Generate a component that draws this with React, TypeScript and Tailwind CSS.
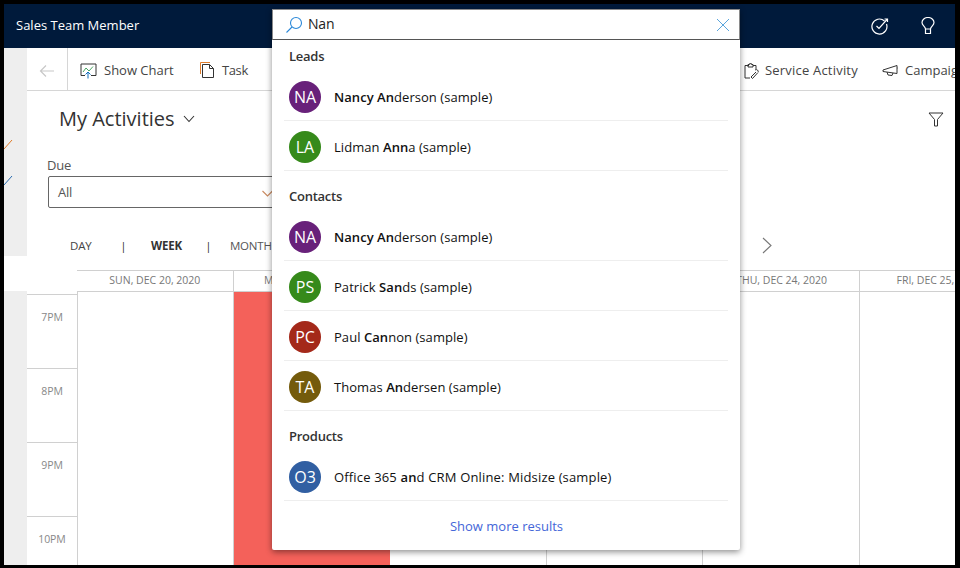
const font = { fontFamily: '"Open Sans", "Noto Sans", sans-serif' };

type Row = { initials: string; color: string; wide?: boolean; parts: [string, boolean][] };
const sections: { title: string; first?: boolean; rows: Row[] }[] = [
  {
    title: "Leads",
    first: true,
    rows: [
      { initials: "NA", color: "bg-[#68217a]", parts: [["Nancy An", true], ["derson (sample)", false]] },
      { initials: "LA", color: "bg-[#368a1b]", parts: [["Lidman ", false], ["Ann", true], ["a (sample)", false]] },
    ],
  },
  {
    title: "Contacts",
    rows: [
      { initials: "NA", color: "bg-[#68217a]", parts: [["Nancy An", true], ["derson (sample)", false]] },
      { initials: "PS", color: "bg-[#368a1b]", parts: [["Patrick ", false], ["San", true], ["ds (sample)", false]] },
      { initials: "PC", color: "bg-[#a4291a]", parts: [["Paul ", false], ["Can", true], ["non (sample)", false]] },
      { initials: "TA", color: "bg-[#745b0c]", parts: [["Thomas ", false], ["An", true], ["dersen (sample)", false]] },
    ],
  },
  {
    title: "Products",
    rows: [
      { initials: "O3", color: "bg-[#315fa2]", wide: true, parts: [["Office 365 ", false], ["an", true], ["d CRM Online: Midsize (sample)", false]] },
    ],
  },
];

function ResultRow({ row }: { row: Row }) {
  return (
    <div className="mx-[12px] flex h-[50px] items-center border-b border-[#eeeeee] pl-[5px] pt-[3px]">
      <div className={`flex h-[32px] w-[32px] shrink-0 items-center justify-center rounded-full text-[16px] text-white ${row.color}`}>
        {row.initials}
      </div>
      <div className={`ml-[13px] pt-[2px] text-[13px] text-[#111111] ${row.wide ? "tracking-[0.16px]" : "tracking-[0.05px]"}`}>
        {row.parts.map(([t, b], i) => (
          <span key={i} className={b ? "font-semibold" : ""}>{t}</span>
        ))}
      </div>
    </div>
  );
}

function Dropdown() {
  return (
    <div className="absolute left-[268px] top-[5px] h-[541px] w-[468px] rounded-b-[2px] bg-white shadow-[0_2px_6px_rgba(0,0,0,0.45)]">
      <div className="flex h-[31px] items-center border border-[#8a8a8a] border-b-[#555555] pl-[12px] pr-[9px]">
        <svg width="18" height="18" viewBox="0 0 18 18" fill="none" stroke="#2b88d8" strokeWidth="1.1">
          <circle cx="11" cy="7" r="5.5" />
          <path d="M7 11 L1.5 16.5" />
        </svg>
        <span className="ml-[5px] flex-1 pb-[2px] text-[14px] tracking-[-0.2px] text-[#222222]">Nan</span>
        <svg width="14" height="14" viewBox="0 0 14 14" fill="none" stroke="#5aa5dc" strokeWidth="1">
          <path d="M1 1 L13 13 M13 1 L1 13" />
        </svg>
      </div>
      {sections.map((s) => (
        <div key={s.title}>
          <div className={`flex items-center pl-[17px] text-[13px] font-semibold tracking-[-0.25px] text-[#333333] ${s.first ? "h-[31px] pt-[3px]" : "h-[40px] pt-[12px]"}`}>
            {s.title}
          </div>
          {s.rows.map((r, i) => (
            <ResultRow key={i} row={r} />
          ))}
        </div>
      ))}
      <div className="flex h-[49px] items-center justify-center pl-[1px] pt-[3px] text-[13px] text-[#4466d8]">
        Show more results
      </div>
    </div>
  );
}

function Toolbar() {
  return (
    <div className="flex h-[43px] shrink-0 overflow-hidden whitespace-nowrap border-b border-[#d6d6d6] text-[13px] text-[#444444]">
      <div className="flex h-full w-[41px] shrink-0 items-center justify-center border-r border-[#d6d6d6] pt-[3px]">
        <svg width="16" height="14" viewBox="0 0 16 14" fill="none" stroke="#c8c8c8" strokeWidth="1.2">
          <path d="M15 7 H1.5 M7 1.5 L1.5 7 L7 12.5" />
        </svg>
      </div>
      <div className="flex h-full items-center pt-[3px]">
        <svg className="ml-[12px] shrink-0" width="17" height="16" viewBox="0 0 17 16" fill="none" strokeWidth="1">
          <path d="M5 12.5 H1 V1 H16 V12.5 H11" stroke="#333333" />
          <path d="M3 9 L6 5 L9 8 L13 3.5" stroke="#4aa564" />
          <path d="M8 15.5 V9 M5.5 11.5 L8 9 L10.5 11.5" stroke="#106ebe" />
        </svg>
        <span className="ml-[7px] w-[71px]">Show Chart</span>
        <svg className="ml-[25px] shrink-0" width="15" height="17" viewBox="0 0 15 17" fill="none" strokeWidth="1">
          <path d="M0.5 12 V0.5 H10" stroke="#e07b28" />
          <path d="M2.5 2.5 H9.5 L13.5 6.5 V15.5 H2.5 Z M9.5 2.5 V6.5 H13.5" stroke="#333333" />
        </svg>
        <span className="ml-[7px] w-[26px] tracking-[-0.4px]">Task</span>
        <svg className="ml-[496px] shrink-0" width="15" height="16" viewBox="0 0 15 16" fill="none" stroke="#333333" strokeWidth="1">
          <path d="M5 2.5 H1 V15 H6 M9 2.5 H12 V6 M4 4 V1.5 H5.5 V0.7 H7.5 V1.5 H9 V4 Z" />
          <path d="M7 14 L12 9 M11 7 A2 2 0 0 1 14 9.5 M7 14 L8.5 15.5 L13.5 10" />
        </svg>
        <span className="ml-[6px] w-[93px] tracking-[0.2px]">Service Activity</span>
        <svg className="ml-[24px] shrink-0" width="16" height="14" viewBox="0 0 16 14" fill="none" stroke="#333333" strokeWidth="1">
          <path d="M1 6 L15 1.5 V9.5 L1 7.5 Z M15 4 H15.5 M5 8 L6 11 L10 11.5 L11 9" />
        </svg>
        <span className="ml-[7px]">Campaign Response</span>
      </div>
    </div>
  );
}

const days = ["SUN, DEC 20, 2020", "MON, DEC 21, 2020", "TUE, DEC 22, 2020", "WED, DEC 23, 2020", "THU, DEC 24, 2020", "FRI, DEC 25, 2020"];

function Calendar() {
  return (
    <div className="flex min-h-0 flex-1 flex-col overflow-hidden">
      <div className="ml-[50px] flex h-[22px] shrink-0 border-y border-[#d0d0d0]">
        {days.map((d) => (
          <div key={d} className="flex w-[156.7px] shrink-0 items-center justify-center whitespace-nowrap border-r border-[#d0d0d0] text-[10.5px] text-[#777777] last:border-r-0">
            {d}
          </div>
        ))}
      </div>
      <div className="flex min-h-0 flex-1">
        <div className="flex w-[51px] shrink-0 flex-col border-r border-[#d0d0d0] pt-[2px]">
          {["7PM", "8PM", "9PM", "10PM"].map((t) => (
            <div key={t} className="h-[74px] shrink-0 border-t border-[#d0d0d0] pt-[15px] text-center text-[10.5px] tracking-[-0.1px] text-[#888888]">
              {t}
            </div>
          ))}
        </div>
        <div className="w-[156px] shrink-0 border-r border-[#d0d0d0]" />
        <div className="w-[156px] shrink-0 bg-[#f4615a]" />
        {days.slice(2).map((d) => (
          <div key={d} className="w-[156.7px] shrink-0 border-r border-[#d0d0d0]" />
        ))}
      </div>
    </div>
  );
}

function Content() {
  return (
    <div className="flex min-w-0 flex-1 flex-col bg-white">
      <Toolbar />
      <div className="relative h-[179px] shrink-0">
        <div className="flex h-[56px] items-center pl-[32px] text-[20px] font-medium text-[#333333]">
          My Activities
          <svg className="ml-[8px]" width="12" height="8" viewBox="0 0 12 8" fill="none" stroke="#333333" strokeWidth="1.1">
            <path d="M1 1 L6 6.5 L11 1" />
          </svg>
        </div>
        <svg className="absolute right-[11px] top-[21px]" width="16" height="15" viewBox="0 0 16 15" fill="none" stroke="#333333" strokeWidth="1">
          <path d="M1 1 H15 L9.5 7.5 V14 H6.5 V7.5 Z" />
        </svg>
        <div className="pl-[20px] pt-[9px]">
          <div className="text-[13px] leading-[18px] tracking-[-0.2px] text-[#555555]">Due</div>
          <div className="ml-[1px] mt-[2px] flex h-[32px] w-[260px] items-center rounded-l-[2px] border border-[#666666] pl-[9px] pt-[2px] text-[13px] tracking-[-0.2px] text-[#555555]">
            <span className="w-[204px]">All</span>
            <svg className="shrink-0" width="11" height="7" viewBox="0 0 11 7" fill="none" stroke="#c98a60" strokeWidth="1.1">
              <path d="M0.5 1 L5.5 6 L10.5 1" />
            </svg>
          </div>
        </div>
        <div className="absolute left-[43px] top-[146px] flex items-center whitespace-nowrap text-[11.5px] tracking-[-0.2px] text-[#555555]">
          <span className="w-[50.35px] text-[#444444]">DAY</span>
          <span className="w-[30.65px] font-medium text-[#333333]">|</span>
          <span className="w-[54.35px] font-bold text-[#333333]">WEEK</span>
          <span className="w-[24.65px] font-medium text-[#333333]">|</span>
          <span>MONTH</span>
        </div>
        <svg className="absolute left-[735px] top-[146px]" width="10" height="17" viewBox="0 0 10 17" fill="none" stroke="#777777" strokeWidth="1.1">
          <path d="M1 1 L9 8.5 L1 16" />
        </svg>
      </div>
      <Calendar />
    </div>
  );
}

export default function App() {
  return (
    <div className="h-[568px] w-[960px] overflow-hidden bg-black pb-[3px] pl-[4px] pr-[5px] pt-[4px]" style={font}>
      <div className="relative flex h-full flex-col overflow-hidden bg-white">
        <header className="flex h-[44px] shrink-0 items-center justify-between bg-[#001a3b] pl-[12px] pr-[20px] text-white">
          <span className="text-[13px]">Sales Team Member</span>
          <div className="flex items-center gap-[32px]">
            <svg width="18" height="18" viewBox="0 0 18 18" fill="none" stroke="white" strokeWidth="1.2">
              <path d="M13.5 4 A7.5 7.5 0 1 0 15.5 7" />
              <path d="M5.5 9 L8 11.5 L16 2.5 M13.5 2 H16.5 V5" />
            </svg>
            <svg width="14" height="18" viewBox="0 0 14 18" fill="none" stroke="white" strokeWidth="1.2">
              <path d="M4.5 12 C4.5 9.5 1 8.5 1 5.5 A6 5 0 0 1 13 5.5 C13 8.5 9.5 9.5 9.5 12 Z M4.5 12 V16.5 H9.5 V12" />
            </svg>
          </div>
        </header>
        <div className="flex min-h-0 flex-1">
          <aside className="flex w-[23px] shrink-0 flex-col bg-[#eeeeee]">
            <div className="h-[208px] shrink-0 overflow-hidden pt-[90px]">
              <svg width="9" height="50" viewBox="0 0 9 50" fill="none" strokeWidth="1">
                <path d="M0 11 L8 2" stroke="#e07b28" />
                <path d="M0 47 L8 38" stroke="#2b6cb0" />
              </svg>
            </div>
            <div className="h-[35px] shrink-0 bg-white" />
          </aside>
          <Content />
        </div>
        <Dropdown />
      </div>
    </div>
  );
}
